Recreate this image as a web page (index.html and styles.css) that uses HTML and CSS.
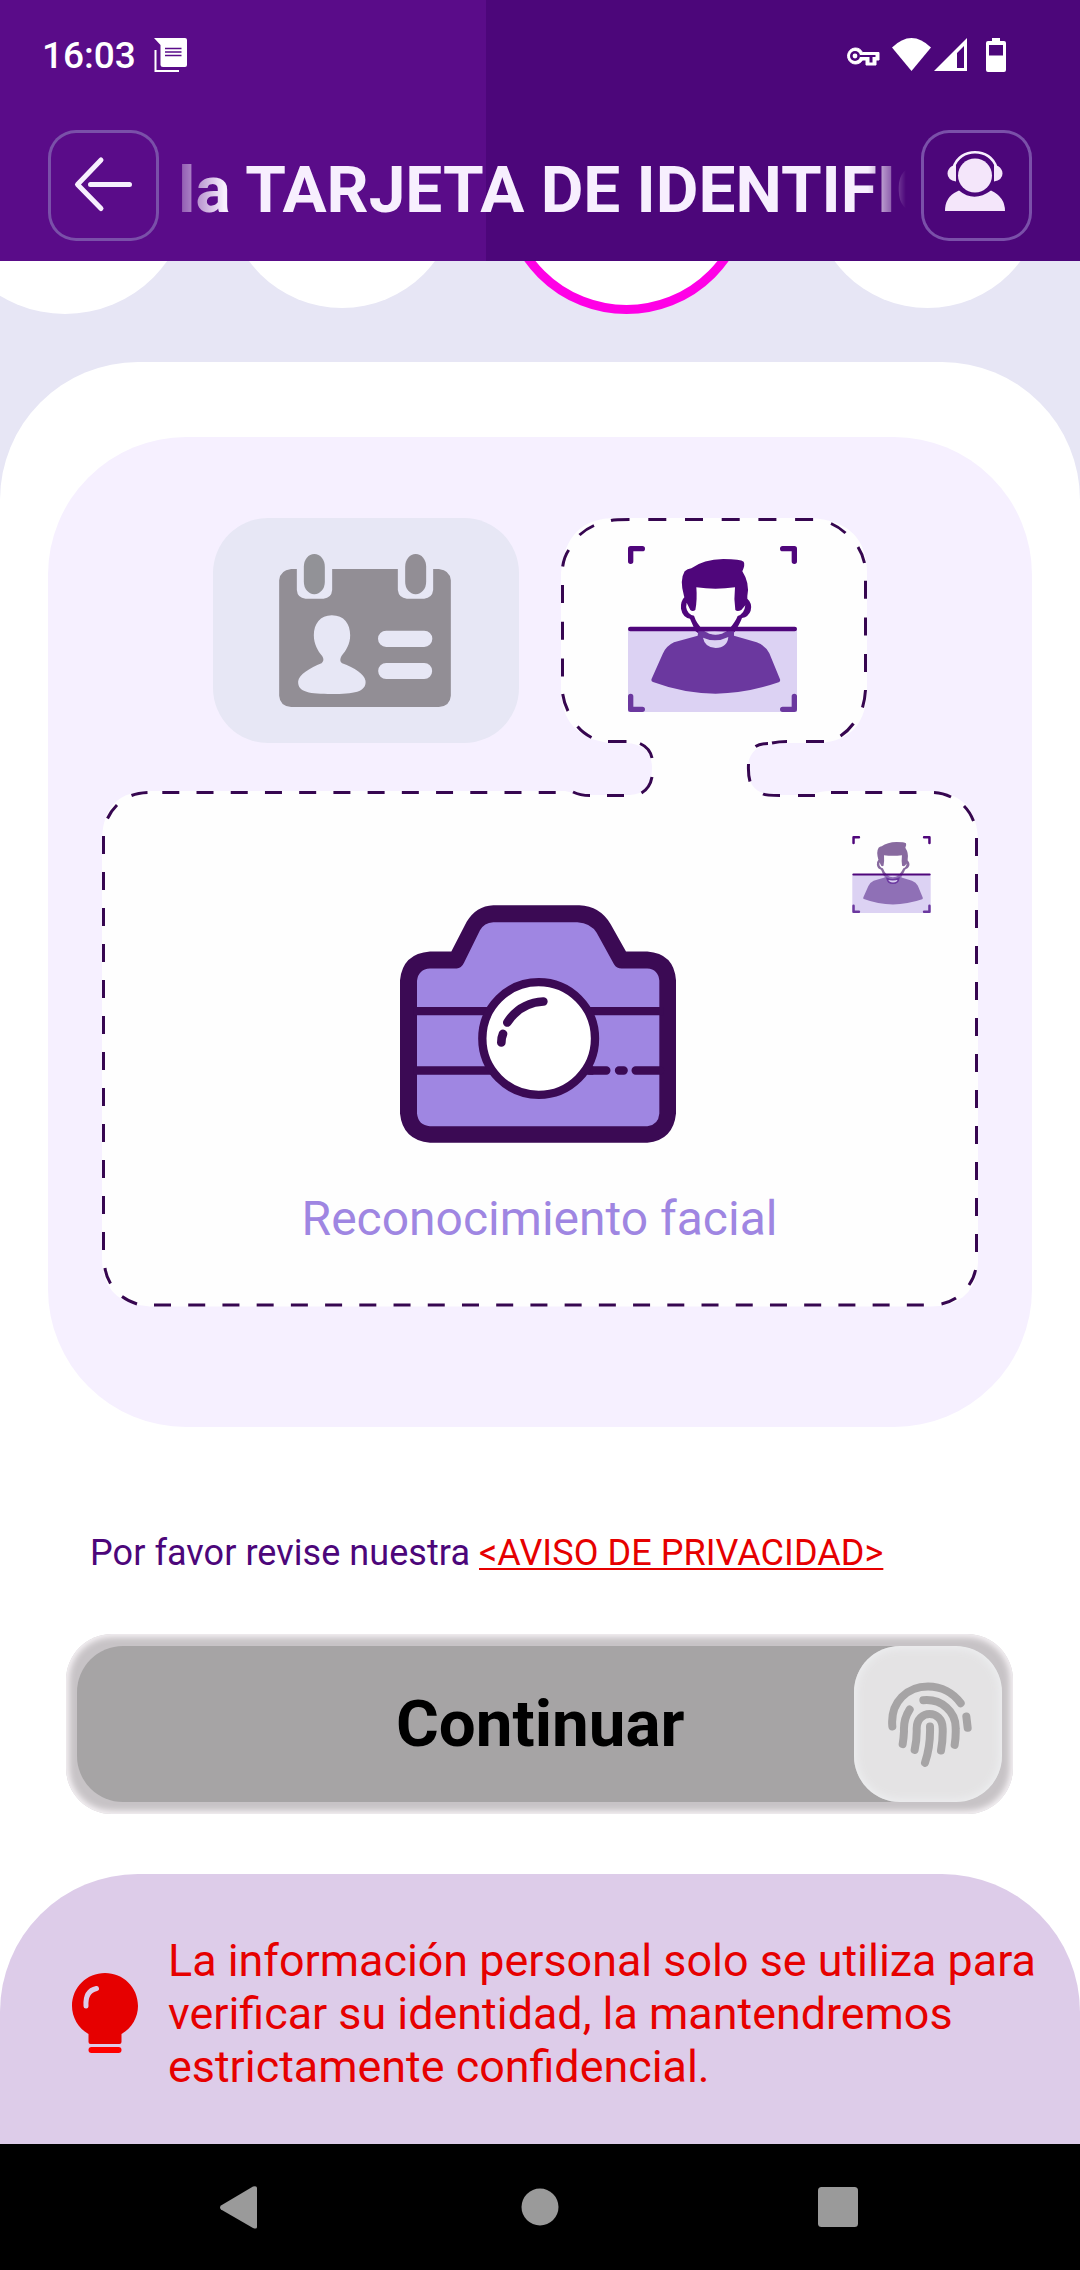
FILE: index.html
```html
<!DOCTYPE html>
<html lang="es">
<head>
<meta charset="utf-8">
<title>Reconocimiento facial</title>
<link rel="stylesheet" href="styles.css">
</head>
<body>
<svg class="defs" width="0" height="0" aria-hidden="true">
  <symbol id="scan" viewBox="294 168 507 498">
    <rect x="294" y="416" width="507" height="250" fill="#dcd2f3"/>
    <g class="scan-person">
      <path class="scan-head" d="M462 318Q448 270 464 244Q472 236 484 235Q520 208 580 207Q632 207 641 215Q646 224 637 244Q660 280 652 318L652 326Q668 340 662 362Q656 380 636 384Q630 400 616 423L610 430H505L496 423L480 386Q458 382 453 356Q451 334 463 322ZM499 292Q502 330 496 360Q488 366 481 360L470 338Q464 362 484 375L492 377Q499 400 520 420Q556 434 598 417Q618 392 623 378Q643 372 646 346L634 360Q622 366 616 360Q611 328 615 292Q556 300 499 292Z" fill-rule="evenodd"/>
      <path class="scan-body" d="M505 422L519 422Q556 444 596 422H612V437L680 457Q706 466 718 490L750 568Q752 574 746 577Q650 610 557 611Q460 610 369 576Q362 573 365 566L398 492Q408 468 432 457L503 437Z"/>
      <path class="scan-collar" d="M519 443Q557 460 595 441Q592 473 557 474Q524 472 519 443Z"/>
      <path d="M522 424Q556 444 592 424Z" fill="#dcd2f3"/>
    </g>
    <g fill="none" stroke-width="16" stroke-linecap="round" stroke-linejoin="round">
      <path d="M302 214V176H337M758 176H793V214" stroke="#4f067b"/>
      <path d="M302 619V658H337M758 658H793V619" stroke="#6b389f"/>
      <path d="M301 417H794" stroke="#4f067b" stroke-width="14"/>
    </g>
  </symbol>
</svg>

<div class="screen">
  <header class="header">
    <div class="status">
      <div class="status-left">
        <span class="clock">16:03</span>
        <svg class="i-msg" viewBox="0 0 33 34"><path d="M0 0H31Q33 0 33 2V27Q33 29 31 29H9Q6.500 29 6.500 27V7Z" fill="#fff"/><path d="M1.500 12V33H25" fill="none" stroke="#fff" stroke-width="2"/><path d="M11 10.500H27.500M11 14H27.500M11 17.500H27.500" stroke="#5a0c89" stroke-width="1.500"/></svg>
      </div>
      <div class="status-right">
        <svg class="i-key" viewBox="0 0 34 22"><path d="M9 2A8 8 0 1 0 16.500 14H20V19H30V14H33V6.500H16.500A8 8 0 0 0 9 2Z" fill="#fff" stroke="#fff" stroke-width="1"/><path d="M14 9H29.500V11H26.500V16.500H23.500V11H14Z" fill="#4c067a"/><circle cx="9" cy="10" r="5" fill="#4c067a"/><circle cx="9" cy="10" r="2.400" fill="#fff"/></svg>
        <svg class="i-wifi" viewBox="0 0 39 33"><path d="M0 9.500Q19.500-9.500 39 9.500L19.500 33Z" fill="#fff"/></svg>
        <svg class="i-signal" viewBox="0 0 33 33"><path d="M33 0V33H0ZM30 8L23 15V30H30Z" fill="#fff" fill-rule="evenodd"/></svg>
        <svg class="i-batt" viewBox="0 0 20 34"><path d="M6 0H14V3H18Q20 3 20 5V32Q20 34 18 34H2Q0 34 0 32V5Q0 3 2 3H6ZM3 7V17.500H17V7Z" fill="#fff" fill-rule="evenodd"/></svg>
      </div>
    </div>
    <div class="toolbar">
      <button class="tool" aria-label="Atrás">
        <svg width="111" height="111" viewBox="0 0 111 111" fill="none" stroke="#f7effe" stroke-width="5" stroke-linecap="round" stroke-linejoin="round"><path d="M53 30L29.500 54.500L53 78.500M42.500 54.500H81.500"/></svg>
      </button>
      <h1 class="title">la TARJETA DE IDENTIFIC</h1>
      <button class="tool" aria-label="Soporte">
        <svg width="111" height="111" viewBox="0 0 111 111"><g fill="#f4e6fa"><circle cx="54" cy="45.500" r="17"/><path d="M24 81Q24 67 36 61.500L38 60.500Q53 73 70 60.500Q84 67 84 81Z"/><path d="M35 35V51.500Q26.500 50 26.500 43.500Q26.500 39 31 36ZM73 35V51.500Q81.500 50 81.500 43.500Q81.500 39 77 36Z"/></g><path d="M32.500 38C38 17 70 17 75.500 38" fill="none" stroke="#f7effe" stroke-width="2.600"/></svg>
      </button>
    </div>
  </header>

  <section class="steps">
    <svg width="1080" height="101" viewBox="0 261 1080 101">
      <g fill="#fff"><circle cx="65" cy="189" r="125"/><circle cx="342" cy="192.500" r="115.500"/><circle cx="927.500" cy="192.500" r="115.500"/></g>
      <circle cx="626.500" cy="189" r="120.500" fill="#fff" stroke="#ff00e6" stroke-width="9"/>
    </svg>
  </section>

  <main class="sheet">
    <section class="card">
      <svg class="frame" width="984" height="990" viewBox="48 437 984 990" aria-hidden="true">
        <path fill="#fefefe" d="M616 518H812Q867 522 867 573V688Q867 741 818 743H776Q748 745 748 768Q748 795 775 795H810Q820 791 830 791H930Q978 793 978 843V1262Q976 1306.500 930 1306.500H150Q102 1304 102 1258V838Q104 791 150 791H565Q580 795 590 795H630Q652 794 652 768Q652 744 626 743H611Q561 738 561 688V573Q565 518 616 518Z"/>
        <g fill="none" stroke="#360650" stroke-width="3">
          <path stroke-dasharray="18 18.700" d="M648.300 519.500H813.500M562.500 585V676.500M865.500 580.700V672"/>
          <path d="M611 520.500Q615 519.500 629.500 519.500M579.500 535Q586 529 594 525.500M562.700 566.500Q564 557 568.700 550M562.700 694Q564 703 568 711M577.500 726.500Q583 733 591.500 737.500M608 741.500H626.500M831 523.500Q839 527 845.500 533M858 547Q862.500 554 864.500 563M865.500 690Q865 699 862.500 707.500M853.500 723.500Q848 731 840.500 736M806 741.500H824M772 743Q779 741.500 787 741.500M755.500 746.500Q760 743.500 768 743.500M640 743.500Q650 748 652 758M652 777Q650 788 641.500 793M748.500 764Q748 775 750 781.500M763 794Q766 795.500 780 795.500M798 795.500H815M573 792Q580 795.500 590 795.500M607 795.500H624"/>
          <path stroke-dasharray="17 17.220" d="M162.300 792.500H556M831 792.500H918M154 1305H925"/>
          <path stroke-dasharray="18 18" d="M103.500 836V1250M976.500 838V1252"/>
          <path d="M107.500 818.500Q111 811 117 805M131.500 795.500Q138 793 147.500 792.500M934 792.500Q943 793 951 797M964 806Q970 812 973.500 821M105 1268Q106 1276 110.500 1283.500M122 1296.500Q128 1301 137 1304M975.500 1270Q974 1278 969 1285M956 1298Q950 1302 941.500 1304"/>
        </g>
      </svg>
      <div class="tabs">
        <div class="tab tab-id">
          <svg class="i-id" viewBox="267 192 515 459">
            <path fill="#928e95" fill-rule="evenodd" d="M303 237H320V300Q322 324 346 326H400Q424 324 426 300V237H623V300Q626 324 650 326H702Q726 324 729 300V237H746Q780 241 782 271V617Q780 648 746 651H303Q269 648 267 617V271Q269 241 303 237ZM425 376C390 376 371 402 371 436C371 462 383 484 396 498C402 508 400 514 394 520C360 534 326 554 324 574C322 608 360 612 425 612C490 612 530 606 526 572C522 552 494 534 456 520C448 514 450 506 454 498C468 482 480 462 480 436C480 402 462 376 425 376ZM588 422A24 24 0 0 0 588 471H702A24 24 0 0 0 702 422ZM588 519A24 24 0 0 0 588 567H702A24 24 0 0 0 702 519Z"/>
            <rect x="341" y="192" width="63" height="121" rx="31" ry="38" fill="#929297"/><rect x="645" y="192" width="63" height="121" rx="31" ry="38" fill="#928e95"/>
          </svg>
        </div>
        <div class="tab tab-face"><svg class="i-scan"><use href="#scan"/></svg></div>
      </div>
      <div class="capture">
        <svg class="i-scan-small"><use href="#scan"/></svg>
        <svg class="i-camera" viewBox="60 75 828 713">
          <path d="M340 100H595Q645 102 668 140L722 240H800Q860 244 863 300V700Q858 758 800 763H150Q90 758 86 700V300Q90 244 150 240H232L278 145Q300 102 340 100Z" fill="#9f86e2"/>
          <path fill="#3b0a54" fill-rule="evenodd" d="M340 75H598Q660 77 692 132L738 214H802Q882 220 888 300V700Q880 780 802 788H150Q68 780 60 700V300Q68 220 150 214H214L260 125Q288 77 340 75ZM340 126Q312 128 300 150L252 248Q244 265 230 265H150Q115 267 111 302V700Q115 736 150 738H802Q835 735 838 700V302Q835 267 802 265H725Q710 265 702 252L650 158Q632 128 592 126Z"/>
          <g fill="none" stroke="#3b0a54" stroke-width="25"><path d="M100 393H340M620 393H850M100 571H340M610 571H640"/><path stroke-linecap="round" d="M630 571H679M717 571H731M767 571H840"/></g>
          <circle cx="476" cy="475" r="169" fill="#fff" stroke="#3b0a54" stroke-width="25"/>
          <path d="M490 364Q420 368 382 427M369 461Q364 472 364 487" fill="none" stroke="#3b0a54" stroke-width="26" stroke-linecap="round"/>
        </svg>
        <p class="capture-label">Reconocimiento facial</p>
      </div>
    </section>

    <p class="privacy">Por favor revise nuestra <a>&lt;AVISO DE PRIVACIDAD&gt;</a></p>

    <button class="continue">
      <span class="continue-face">
        <span class="continue-text">Continuar</span>
        <span class="finger">
          <svg width="84" height="85" viewBox="984 545 252 254" fill="none" stroke="#a6a4a5" stroke-width="24" stroke-linecap="round"><path d="M997 678C990 602 1044 558 1104 558C1144 558 1180 577 1202 608M1219 648Q1221 664 1223 682M1090 599C1145 594 1188 634 1187 683Q1188 710 1184 733M1049 627Q1030 656 1032 692Q1031 714 1028 731M1064 748Q1071 718 1070 684C1070 626 1148 626 1148 684Q1149 718 1143 750M1110 678Q1112 736 1095 787"/></svg>
        </span>
      </span>
    </button>
  </main>

  <aside class="notice">
    <svg class="i-bulb" viewBox="0 0 66 80"><path d="M33 0C51 0 66 14 66 33C66 44 60 55 49.500 61V69Q49.500 71 47.500 71H18.500Q16.500 71 16.500 69V61C6 55 0 44 0 33C0 14 15 0 33 0Z" fill="#e60000"/><path d="M14 33Q13 18 24.500 15.500" fill="none" stroke="#ddcce9" stroke-width="5" stroke-linecap="round"/><rect x="16.500" y="74" width="33" height="6" rx="3" fill="#ff0000"/></svg>
    <p>La información personal solo se utiliza para verificar su identidad, la mantendremos estrictamente confidencial.</p>
  </aside>

  <nav class="navbar">
    <svg width="38" height="43" viewBox="0 0 38 43"><path d="M1 19.500L33 .6Q37 -.5 37 2V41Q37 43.500 33 42L1 23.500Q-1 21.500 1 19.500Z" fill="#9a9a9a"/></svg>
    <svg width="38" height="38" viewBox="0 0 38 38"><circle cx="19" cy="19" r="18.500" fill="#9a9a9a"/></svg>
    <svg width="40" height="40" viewBox="0 0 40 40"><rect width="40" height="40" rx="3.500" fill="#9a9a9a"/></svg>
  </nav>
</div>
</body>
</html>
```

FILE: styles.css
```css
* { box-sizing: border-box; margin: 0; padding: 0; }
body { width: 1080px; font-family: Roboto, "Noto Sans", sans-serif; }
svg { display: block; flex: none; }
button { border: 0; background: none; font: inherit; }
.defs { position: absolute; }
.screen { display: flex; flex-direction: column; width: 1080px; height: 2270px; overflow: hidden; background: linear-gradient(#e7e6f5 1000px, #fff 1000px); }

.header { height: 261px; flex: none; background: linear-gradient(90deg, #5a0c89 486px, #4c067a 486px); color: #fff; }
.status { display: flex; justify-content: space-between; height: 130px; padding: 38px 74px 0 42px; }
.status-left { display: flex; gap: 19px; }
.clock { width: 93px; font-size: 37px; font-weight: 500; line-height: 36px; white-space: nowrap; }
.status-right { display: flex; align-items: flex-start; }
.i-msg { width: 33px; height: 34px; }
.i-key { width: 34px; height: 22px; margin: 8px 12px 0 0; }
.i-wifi { width: 39px; height: 33px; }
.i-signal { width: 33px; height: 33px; margin: 0 19px 0 3px; }
.i-batt { width: 20px; height: 34px; }

.toolbar { display: flex; padding: 0 48px; }
.tool { width: 111px; height: 111px; flex: none; border-radius: 28px; box-shadow: inset 0 0 0 3px #7a50a9; }
.title { flex: 1; min-width: 0; height: 111px; margin: 0 15px 0 19px; overflow: hidden; white-space: nowrap; font-size: 65.700px; line-height: 120px; font-weight: 700; color: #f7effe; mask-image: linear-gradient(90deg, rgba(0,0,0,.3) 0, #000 46px, #000 calc(100% - 38px), transparent 100%); }

.steps { height: 101px; flex: none; }
.sheet { display: flex; flex-direction: column; height: 1512px; flex: none; padding: 75px 48px 0; background: #fff; border-radius: 138px 138px 0 0; }
.card { position: relative; height: 990px; flex: none; padding: 81px 54px 0; border-radius: 138px; background: #f6f0ff; }
.frame { position: absolute; left: 0; top: 0; }
.tabs { position: relative; display: flex; justify-content: space-between; width: 654px; margin: 0 auto 48px 111px; }
.tab { width: 306px; height: 225px; border-radius: 55px; }
.tab-id { padding: 36px 66px; background: #e7e7f5; }
.i-id { width: 172px; height: 153px; }
.tab-face { padding: 28px 67px; }
.i-scan { width: 169px; height: 166px; --head: #4f067b; --body: #6b389f; --collar: none; }
.scan-head { fill: var(--head); }
.scan-body { fill: var(--body); }
.scan-collar { fill: #dcd2f3; stroke: var(--collar); stroke-width: 10; }
.capture { position: relative; display: flex; flex-direction: column; align-items: center; height: 516px; padding-top: 45px; }
.i-scan-small { align-self: flex-end; width: 79px; height: 77px; margin-right: 47px; --head: #886a9f; --body: #8f70b6; --collar: #6b389f; }
.i-camera { width: 276px; height: 238px; margin: -8px 4px 0 0; }
.capture-label { margin: 48px 1px 0 0; font-size: 48px; line-height: 56px; color: #9f86e2; }

.privacy { margin: 104px 0 0 42px; font-size: 36px; line-height: 44px; letter-spacing: .06px; color: #4c067a; white-space: nowrap; }
.privacy a { color: #e60000; text-decoration: underline; text-decoration-thickness: 2px; text-underline-offset: 3px; text-decoration-skip-ink: none; }

.continue { width: 947px; height: 180px; margin: 59px 0 0 18px; padding: 12px 11px; border-radius: 46px; background: #c7c3c6; box-shadow: inset 0 0 6px 3px #f8f4f7; }
.continue-face { display: flex; justify-content: flex-end; align-items: center; height: 156px; border-radius: 46px; background: #a6a4a5; }
.continue-text { flex: 1; padding-left: 319px; text-align: left; font-size: 65.500px; line-height: 78px; font-weight: 700; color: #000; }
.finger { display: flex; align-items: center; justify-content: center; width: 148px; height: 156px; padding-left: 4px; border-radius: 46px; background: #e4e3e4; box-shadow: inset 0 0 10px 2px #eeeff1; }

.notice { display: flex; gap: 30px; height: 270px; flex: none; padding: 60px 0 0 72px; border-radius: 138px 138px 0 0; background: #ddcce9; color: #e60000; }
.i-bulb { width: 66px; height: 80px; margin-top: 39px; }
.notice p { width: 880px; font-size: 44.850px; line-height: 53px; }

.navbar { display: grid; grid-template-columns: 301px 297px 40px; align-items: center; height: 126px; flex: none; padding: 0 220px; background: #000; }
```
